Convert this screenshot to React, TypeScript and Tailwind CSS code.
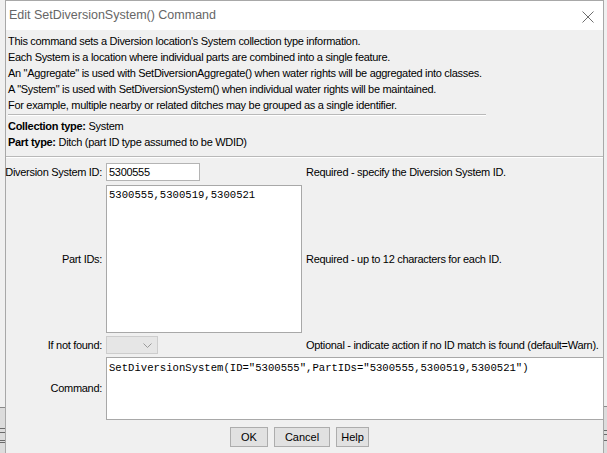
import React from "react";

const sans = { fontFamily: '"Liberation Sans", Arial, sans-serif' };
const mono = { fontFamily: '"Liberation Mono", "Courier New", monospace' };

export default function App() {
  return (
    <div className="w-[607px] h-[453px] overflow-hidden bg-[#f0f0f0] relative" style={sans}>
      {/* background window edges behind */}
      <div className="absolute left-0 top-[407px] w-[5px] h-[46px] bg-[#dcdcdc] border-t border-[#8a8a8a]" />
      <div className="absolute left-0 top-[428px] w-[5px] h-[5px] border-t border-b border-[#6a6a6a]" />
      <div className="absolute left-0 top-[440px] w-[5px] h-[3px] border-t border-b border-[#6a6a6a]" />
      <div className="absolute right-0 top-[406px] w-[3px] h-[47px] bg-[#dcdcdc] border-t border-[#8a8a8a]" />
      <div className="absolute right-0 top-[430px] w-[3px] h-[5px] border-t border-b border-[#6a6a6a]" />
      <div className="absolute right-0 top-[440px] w-[3px] h-[3px] border-t border-[#6a6a6a]" />

      <div className="ml-[5px] w-[599px] h-[453px] border-l border-r border-t border-[#a8a8a8] bg-[#f0f0f0] flex flex-col">
        {/* title bar */}
        <div className="h-[29px] bg-white flex items-center justify-between pl-[3px] pr-[8px] shrink-0">
          <span className="text-[12.5px] text-[#666666] leading-none">
            Edit SetDiversionSystem() Command
          </span>
          <svg width="12" height="12" viewBox="0 0 12 12" className="mr-[1px] mt-[2px]">
            <path d="M0.5 0.5 L11.5 11.5 M11.5 0.5 L0.5 11.5" stroke="#6e6e6e" strokeWidth="1" fill="none" />
          </svg>
        </div>

        <div className="flex flex-col text-[11px] text-black">
          {/* description */}
          <div className="pl-[2px] pt-[3px] leading-[16px] tracking-[-0.3px]">
            <div>This command sets a Diversion location's System collection type information.</div>
            <div>Each System is a location where individual parts are combined into a single feature.</div>
            <div>An "Aggregate" is used with SetDiversionAggregate() when water rights will be aggregated into classes.</div>
            <div>A "System" is used with SetDiversionSystem() when individual water rights will be maintained.</div>
            <div>For example, multiple nearby or related ditches may be grouped as a single identifier.</div>
          </div>
          <div className="ml-[2px] mt-[1px] w-[478px] h-[2px] border-t border-[#b9b9b9] border-b border-b-white" />

          <div className="pl-[2px] pt-[2px] leading-[16px] tracking-[-0.3px]">
            <div><span className="font-bold">Collection type:</span> System</div>
            <div><span className="font-bold">Part type:</span> Ditch (part ID type assumed to be WDID)</div>
          </div>
          <div className="mt-[6px] w-full h-[2px] border-t border-[#b9b9b9] border-b border-b-white" />

          {/* form */}
          <div className="grid grid-cols-[96px_196px_298px] gap-x-[4px] mt-[5px] tracking-[-0.3px]">
            <div className="flex items-center justify-end h-[18px] whitespace-nowrap">Diversion System ID:</div>
            <div className="h-[18px]">
              <div className="w-[94px] h-[18px] bg-white border border-[#b4b4b4] flex items-center pl-[2px]">5300555</div>
            </div>
            <div className="flex items-center h-[18px]">Required - specify the Diversion System ID.</div>

            <div className="flex items-center justify-end mt-[4px]">Part IDs:</div>
            <div className="h-[148px] mt-[4px] bg-white border border-[#a8a8a8] px-[2px] pt-[2px] text-[10.6px] leading-[14px] tracking-normal" style={mono}>
              5300555,5300519,5300521
            </div>
            <div className="flex items-center mt-[4px]">Required - up to 12 characters for each ID.</div>

            <div className="flex items-center justify-end h-[18px] mt-[3px]">If not found:</div>
            <div className="h-[18px] mt-[3px]">
              <div className="w-[52px] h-[18px] bg-[#e6e6e6] border border-[#cdcdcd] flex items-center justify-end pr-[5px]">
                <svg width="9" height="5" viewBox="0 0 9 5">
                  <path d="M0.5 0.5 L4.5 4.5 L8.5 0.5" stroke="#9a9a9a" strokeWidth="1" fill="none" />
                </svg>
              </div>
            </div>
            <div className="flex items-center h-[18px] mt-[3px] whitespace-nowrap">Optional - indicate action if no ID match is found (default=Warn).</div>

            <div className="flex items-center justify-end h-[63px] mt-[3px]">Command:</div>
            <div className="col-span-2 h-[63px] mt-[3px] w-[498px] bg-white border border-[#a8a8a8] px-[2px] pt-[3px] text-[10.6px] leading-[14px] tracking-normal" style={mono}>
              SetDiversionSystem(ID="5300555",PartIDs="5300555,5300519,5300521")
            </div>
          </div>

          {/* buttons */}
          <div className="flex justify-center gap-[6px] mt-[7px] pr-[10px]">
            <button className="w-[38px] h-[20px] bg-[#e1e1e1] border border-[#adadad] text-[11px] leading-none">OK</button>
            <button className="w-[56px] h-[20px] bg-[#e1e1e1] border border-[#adadad] text-[11px] leading-none">Cancel</button>
            <button className="w-[33px] h-[20px] bg-[#e1e1e1] border border-[#adadad] text-[11px] leading-none">Help</button>
          </div>
        </div>
      </div>
    </div>
  );
}
